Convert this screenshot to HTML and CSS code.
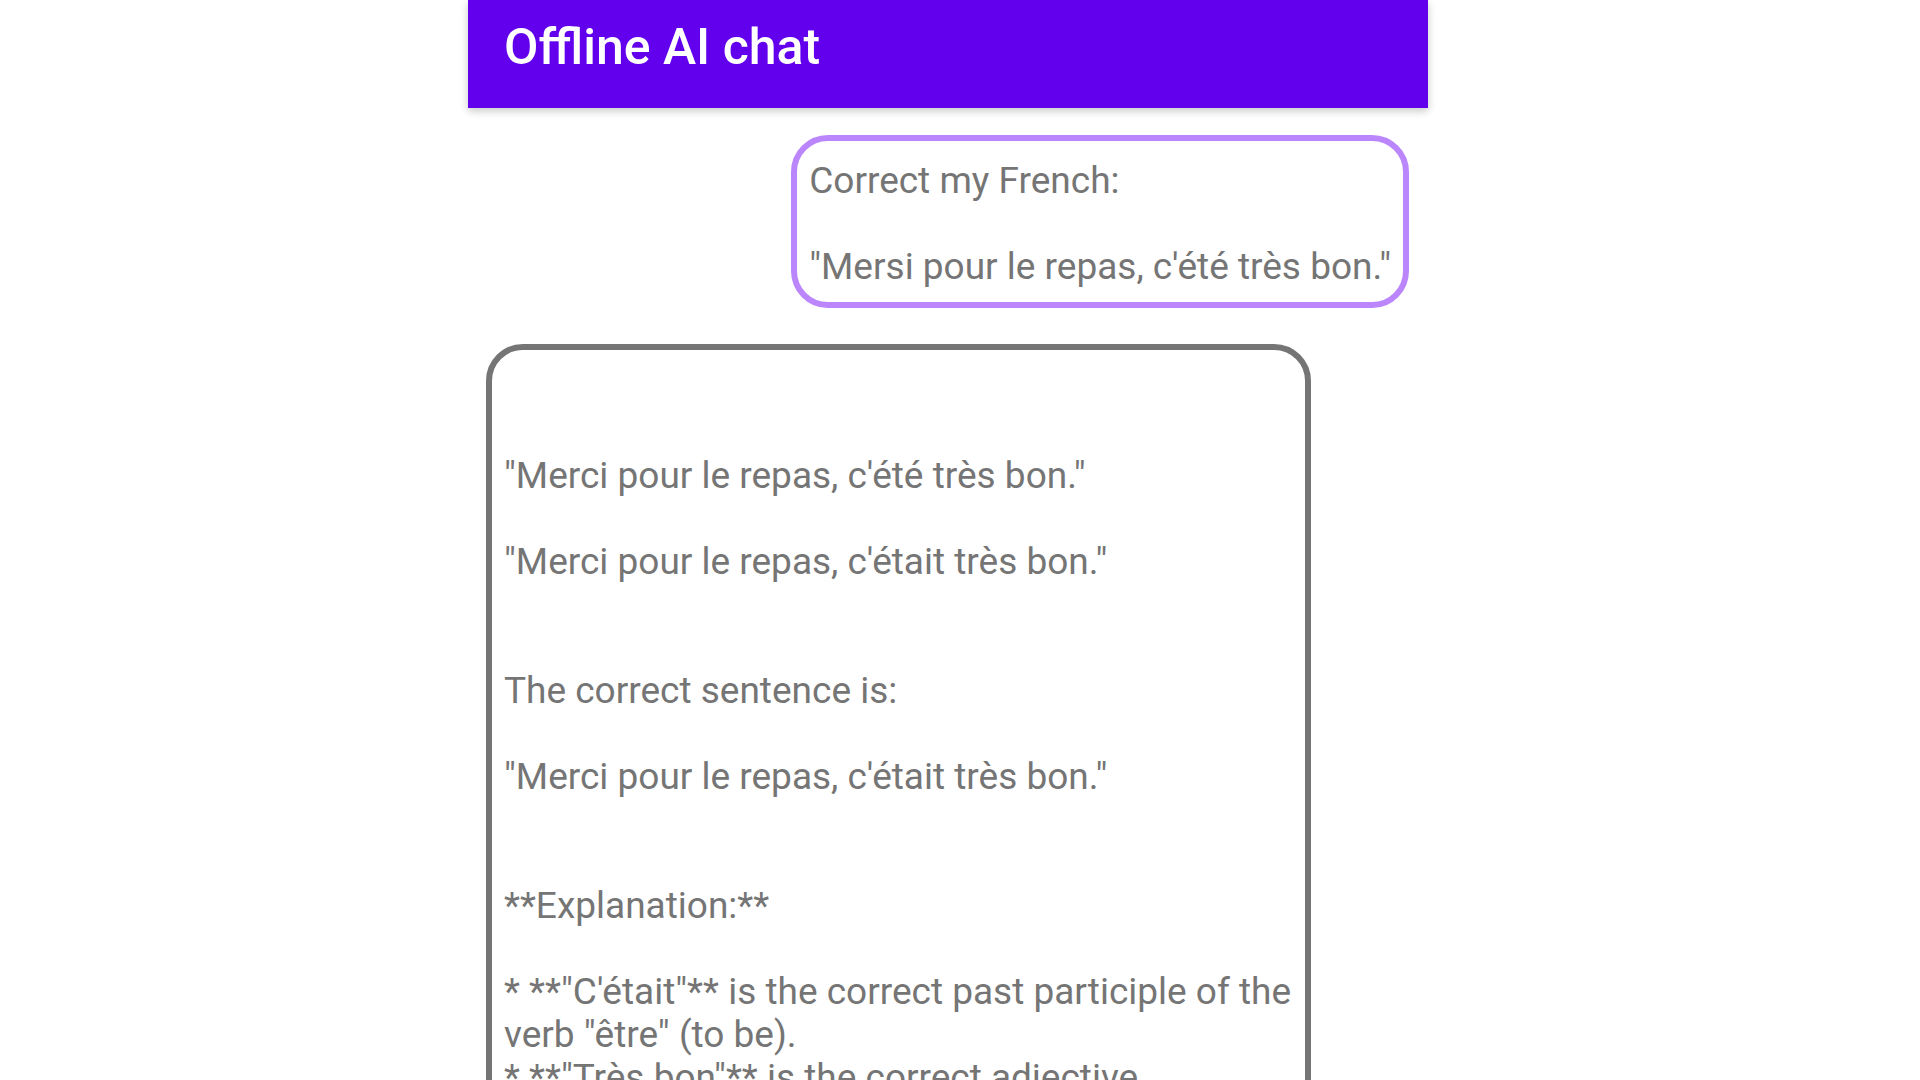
FILE: index.html
```html
<!DOCTYPE html>
<html lang="en">
<head>
<meta charset="utf-8">
<title>Offline AI chat</title>
<link rel="stylesheet" href="styles.css">
</head>
<body>
<div class="app">
  <header class="toolbar">
    <h1 class="toolbar-title">Offline AI chat</h1>
  </header>
  <main class="messages">
    <div class="msg msg-user">Correct my French:

"Mersi pour le repas, c'été très bon."</div>
    <div class="msg msg-bot">

"Merci pour le repas, c'été très bon."

"Merci pour le repas, c'était très bon."


The correct sentence is:

"Merci pour le repas, c'était très bon."


**Explanation:**

* **"C'était"** is the correct past participle of the verb "être" (to be).
* **"Très bon"** is the correct adjective
* **"Merci"** is the correct spelling.</div>
  </main>
</div>
</body>
</html>
```
FILE: styles.css
```css
html, body {
  margin: 0;
  padding: 0;
  height: 100%;
  overflow: hidden;
  background: #ffffff;
}

.app {
  width: 960px;
  height: 1080px;
  margin-left: 468px;
  display: flex;
  flex-direction: column;
  font-family: Roboto, "Noto Sans", sans-serif;
}

.toolbar {
  height: 108px;
  flex: 0 0 108px;
  background: #6200ee;
  box-shadow: 0 3px 8px rgba(0, 0, 0, 0.22);
  box-sizing: border-box;
  padding: 19px 0 0 36px;
  position: relative;
  z-index: 1;
}

.toolbar-title {
  margin: 0;
  color: #ffffff;
  font-family: Roboto, sans-serif;
  font-weight: 500;
  font-size: 50px;
  line-height: 57px;
  letter-spacing: 0;
}

.messages {
  flex: 1;
  overflow: hidden;
  display: flex;
  flex-direction: column;
  padding: 0 19px 0 18px;
}

.msg {
  font-family: Roboto, sans-serif;
  font-size: 37px;
  line-height: 43px;
  color: #757575;
  white-space: pre-wrap;
  border: 6px solid;
  border-radius: 37px;
  padding: 18px 12px 14px 12px;
  background: #ffffff;
}

.msg-user {
  align-self: flex-end;
  margin-top: 27px;
  border-color: #bb86fc;
}

.msg-bot {
  align-self: flex-start;
  margin-top: 36px;
  box-sizing: border-box;
  width: 825px;
  padding-right: 6px;
  border-color: #757575;
}
```
